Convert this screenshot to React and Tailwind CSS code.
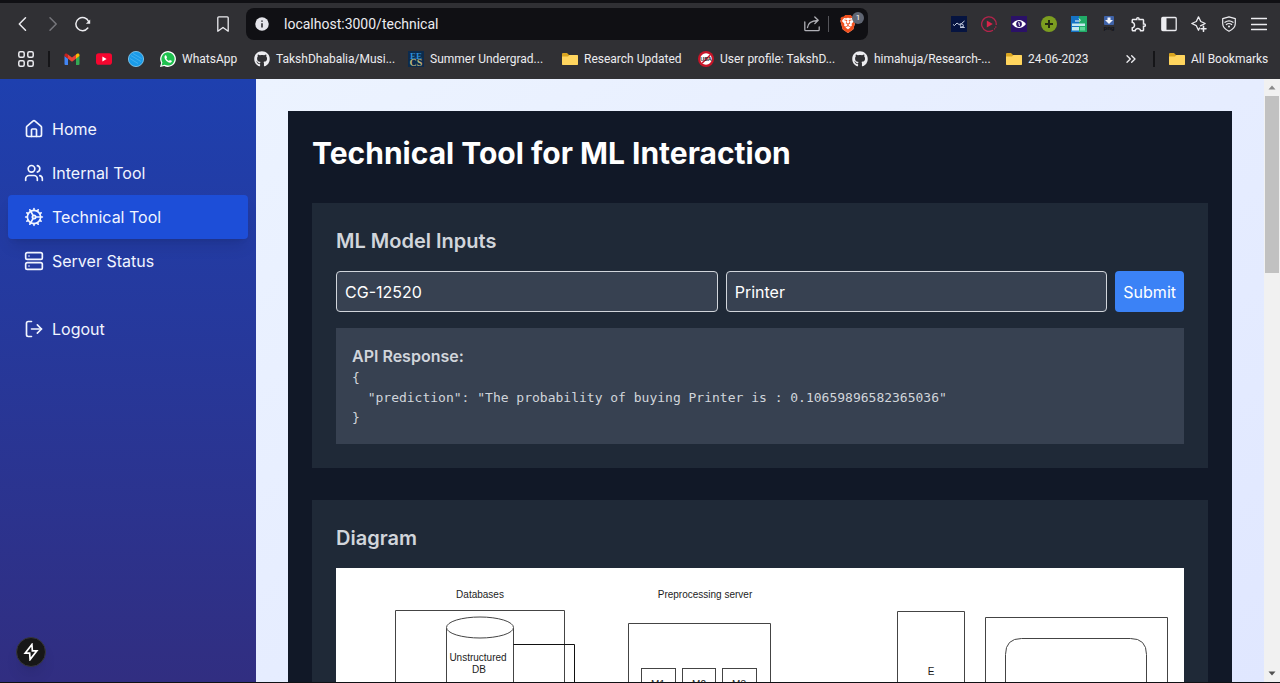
import { useState } from "react";
import { House, Users, Cog, Server, LogOut, ChevronsRight } from "lucide-react";
import { FaGithub } from "react-icons/fa";
import { MdOutlineExtension } from "react-icons/md";
import { SiBrave } from "react-icons/si";

const stroke = {
  fill: "none",
  stroke: "currentColor",
  strokeLinecap: "round",
  strokeLinejoin: "round",
};

function Folder() {
  return (
    <svg viewBox="0 0 16 16" className="size-4">
      <path d="M0 3a1 1 0 0 1 1-1h4l2 2h8a1 1 0 0 1 1 1v8a1 1 0 0 1-1 1H1a1 1 0 0 1-1-1z" fill="#d9a520" />
      <path d="M0 5.500h6l1.500-1.500H15a1 1 0 0 1 1 1v8a1 1 0 0 1-1 1H1a1 1 0 0 1-1-1z" fill="#ffd55e" />
    </svg>
  );
}

function Gmail() {
  return (
    <svg viewBox="0 0 16 16" className="size-4">
      <path d="M0.500 5v8a1 1 0 0 0 1 1H4V7.500z" fill="#4285f4" />
      <path d="M15.500 5v8a1 1 0 0 1-1 1H12V7.500z" fill="#34a853" />
      <path d="M12 3.500v4.200l3.500-2.600V4c0-1.500-1.500-2-2.500-1.300z" fill="#fbbc04" />
      <path d="M4 3.500v4.200L0.500 5.100V4c0-1.500 1.500-2 2.500-1.300z" fill="#c5221f" />
      <path d="M4 3.500 8 6.500l4-3v4.200l-4 3-4-3z" fill="#ea4335" />
    </svg>
  );
}

function YouTube() {
  return (
    <svg viewBox="0 0 16 16" className="size-4">
      <rect y="2.300" width="16" height="11.400" rx="2.800" fill="#f5062f" />
      <path d="M6.400 5.600v4.800L10.600 8z" fill="#fff" />
    </svg>
  );
}

function BlueBall() {
  return (
    <svg viewBox="0 0 16 16" className="size-4">
      <circle cx="8" cy="8" r="7.600" fill="#1a9be8" stroke="#8bd0f5" strokeWidth=".8" />
      <path d="M3 4.500l10 6M5 2.500l8.500 5M2 7.500l8 5" stroke="#5fbcf2" strokeWidth=".6" />
    </svg>
  );
}

function WhatsApp() {
  return (
    <svg viewBox="0 0 16 16" className="size-4">
      <path d="M0 16l1.150-4.100A7.900 7.900 0 1 1 4.200 14.900z" fill="#fff" />
      <path d="M1.600 14.400l.8-2.900a6.600 6.600 0 1 1 2.300 2.200z" fill="#1fc14f" />
      <path d="M5.700 4.200c-.3 0-1.300.6-1.200 2 .2 2.600 3.200 5.300 5.500 5.500 1.100.1 1.900-.8 1.900-1.600 0-.3-1.700-1.200-2-1.100-.4.100-.6.900-.9.900-.8-.1-2.400-1.600-2.600-2.400 0-.3.600-.6.600-.9 0-.4-.7-2.300-1.300-2.400z" fill="#fff" />
    </svg>
  );
}

function Eecs() {
  return (
    <svg viewBox="0 0 16 16" className="size-4">
      <rect width="16" height="16" fill="#0c2b4d" />
      <text x="8" y="7.500" fontSize="9" fontWeight="700" textAnchor="middle" fill="#2c8fd6" fontFamily="Liberation Serif, serif">EE</text>
      <text x="8" y="15" fontSize="10" fontWeight="700" textAnchor="middle" fill="#bdb57c" fontFamily="Liberation Serif, serif">CS</text>
    </svg>
  );
}

function UserProfile() {
  return (
    <svg viewBox="0 0 16 16" className="size-4">
      <circle cx="8" cy="8" r="8" fill="#c81428" />
      <circle cx="8" cy="8" r="5.800" fill="#fff" />
      <path d="M4.200 12 12 4.200" stroke="#c81428" strokeWidth="1.600" />
      <text x="8" y="10" fontSize="5.500" fontWeight="700" textAnchor="middle" fill="#20141a" fontFamily="Liberation Sans, sans-serif">USA</text>
    </svg>
  );
}

const bookmarks = [
  { label: "Gmail", hidden: true, icon: <Gmail /> },
  { label: "YouTube", hidden: true, icon: <YouTube /> },
  { label: "Blog", hidden: true, icon: <BlueBall /> },
  { label: "WhatsApp", icon: <WhatsApp />, width: "w-[78px]" },
  { label: "TakshDhabalia/Musi...", icon: <FaGithub size={16} />, width: "w-[138px]" },
  { label: "Summer Undergrad...", icon: <Eecs />, width: "w-[138px]" },
  { label: "Research Updated", icon: <Folder />, width: "w-[120px]" },
  { label: "User profile: TakshD...", icon: <UserProfile />, width: "w-[138px]" },
  { label: "himahuja/Research-...", icon: <FaGithub size={16} />, width: "w-[138px]" },
  { label: "24-06-2023", icon: <Folder />, width: "w-[88px]" },
];

const extensions = [
  {
    label: "Chart extension",
    icon: (
      <svg viewBox="0 0 16 16" className="size-4">
        <rect width="16" height="16" fill="#061440" />
        <path d="M2 8.500l1.500 1L6 7l2 1.500 2.500-1 3-2.500" stroke="#dfe6f5" strokeWidth=".9" fill="none" />
        <circle cx="10.800" cy="9.500" r="1.500" stroke="#dfe6f5" strokeWidth=".9" fill="none" />
        <path d="M12 10.500l1.500 1H9" stroke="#dfe6f5" strokeWidth=".8" fill="none" />
      </svg>
    ),
  },
  {
    label: "Video speed",
    icon: (
      <svg viewBox="0 0 16 16" className="size-4">
        <path d="M12 14.200A7.300 7.300 0 1 1 15.200 9" stroke="#b3244b" strokeWidth="1.300" fill="none" />
        <path d="M15 10.500a7 7 0 0 1-2 3" stroke="#b3244b" strokeWidth="1.300" strokeDasharray="1.200 1" fill="none" />
        <path d="M5.800 4.400v7.200L11.800 8z" fill="#d92349" />
      </svg>
    ),
  },
  {
    label: "Eye extension",
    icon: (
      <svg viewBox="0 0 16 16" className="size-4">
        <rect width="16" height="16" fill="#2b1168" />
        <path d="M1 8q3.200-4 7-4t7 4q-3.200 4-7 4T1 8z" fill="#fff" />
        <circle cx="8" cy="8" r="2.900" fill="#2b1168" />
        <path d="M7 6.800h1.200v2.600H9" stroke="#fff" strokeWidth=".9" fill="none" />
      </svg>
    ),
  },
  {
    label: "Add",
    icon: (
      <svg viewBox="0 0 16 16" className="size-4">
        <circle cx="8" cy="8" r="8" fill="#7c9d20" />
        <path d="M8 4v8M4 8h8" stroke="#252b12" strokeWidth="2" />
      </svg>
    ),
  },
  {
    label: "Page builder",
    icon: (
      <svg viewBox="0 0 16 16" className="size-4">
        <rect width="16" height="16" fill="#21ab68" />
        <path d="M0 0h8v16H0z" fill="#1572c4" />
        <path d="M1 7.500h13v2.500H1zM1 11h7v3.500H1z" fill="#c5e9ee" />
        <path d="M9 11h5v3.500H9z" fill="#5ed69a" />
        <path d="M4 5h5M8 2.500l1.500 2" stroke="#fff" strokeWidth="1" />
      </svg>
    ),
  },
  {
    label: "Save as png",
    icon: (
      <svg viewBox="0 0 16 16" className="size-4">
        <rect x="3" y="0" width="10" height="9" rx="1" fill="#3e62a8" />
        <path d="M6.500 1.500h3V4H12L8 8 4 4h2.500z" fill="#f1f4fb" />
        <text x="8" y="14" fontSize="6" fontWeight="700" textAnchor="middle" fill="#121318" fontFamily="Liberation Sans, sans-serif">png</text>
      </svg>
    ),
  },
  { label: "Extensions", icon: <MdOutlineExtension size={18} className="-mx-px shrink-0" /> },
  {
    label: "Sidebar",
    icon: (
      <svg viewBox="0 0 16 16" className="size-4">
        <rect x=".8" y="1.500" width="14.400" height="13" rx="1" {...stroke} strokeWidth="1.300" />
        <path d="M1 2h4.500v12H1z" fill="currentColor" />
      </svg>
    ),
  },
  {
    label: "Leo AI",
    icon: (
      <svg viewBox="0 0 16 16" className="size-4">
        <path d="M9.500 9.800 14.200 7.500 9.800 5.500 7.500.9 5.300 5.500.8 7.500 5.300 9.700 7.500 14.200 8.500 12" {...stroke} strokeWidth="1.300" />
        <path d="M12.500 10.300v5M10 12.800h5" {...stroke} strokeWidth="1.600" />
      </svg>
    ),
  },
  {
    label: "VPN",
    icon: (
      <svg viewBox="0 0 16 16" className="size-4">
        <path d="M8 .8l6.300 1.800v5c0 3.600-3 6.200-6.300 7.700C4.700 13.800 1.700 11.200 1.700 7.600v-5z" {...stroke} strokeWidth="1.200" />
        <path d="M4 6.300q4-3 8 0M5.300 8.500q2.700-2 5.400 0" {...stroke} strokeWidth="1.200" />
        <circle cx="8" cy="10.600" r="1" fill="currentColor" />
      </svg>
    ),
  },
  {
    label: "Menu",
    icon: (
      <svg viewBox="0 0 16 16" className="size-4">
        <path d="M.5 2.500h15M.5 8.500h15M.5 13.500h15" {...stroke} strokeWidth="1.300" />
      </svg>
    ),
  },
];

function BrowserChrome() {
  return (
    <header className="shrink-0 border-t-3 border-[#101014] bg-[#303034] font-['Roboto','Noto_Sans',sans-serif] text-[#ececf0]">
      <div className="flex h-[41px] items-center">
        <div className="flex items-center gap-3.5 pl-[15px]">
          <button aria-label="Back" className="size-4">
            <svg viewBox="0 0 16 16" className="size-4">
              <path d="M10.500 1.800 4.300 8l6.200 6.200" {...stroke} strokeWidth="1.500" />
            </svg>
          </button>
          <button aria-label="Forward" className="size-4 text-[#77777c]">
            <svg viewBox="0 0 16 16" className="size-4">
              <path d="M5 1.800 11.200 8 5 14.200" {...stroke} strokeWidth="1.500" />
            </svg>
          </button>
          <button aria-label="Reload" className="size-4">
            <svg viewBox="0 0 16 16" className="size-4">
              <path d="M12.800 12A6.600 6.600 0 1 1 13.600 5.500" {...stroke} strokeWidth="1.500" />
              <path d="M15.200 3.500v4.300h-4.300z" fill="currentColor" />
            </svg>
          </button>
        </div>
        <button aria-label="Bookmark this page" className="ml-[124px] size-4">
          <svg viewBox="0 0 16 16" className="size-4">
            <path d="M2.800 1.800q0-1 1-1h8.400q1 0 1 1v13.400L8 11.400l-5.200 3.800z" {...stroke} strokeWidth="1.300" />
          </svg>
        </button>
        <div className="ml-[15px] flex h-8 flex-1 items-center rounded-lg bg-[#101014] pr-1 pl-[9px]">
          <svg viewBox="0 0 16 16" className="size-3.5">
            <circle cx="8" cy="8" r="7.700" fill="#e4e4ea" />
            <path d="M8 7v5M8 4v1.500" stroke="#202024" strokeWidth="1.700" />
          </svg>
          <input
            aria-label="Address"
            defaultValue="localhost:3000/technical"
            className="ml-[15px] min-w-0 flex-1 bg-transparent text-sm outline-none"
          />
          <button aria-label="Share" className="size-4 text-[#b0b0b6]">
            <svg viewBox="0 0 16 16" className="size-4">
              <path d="M.8 6v7.700q0 1 1 1h12.400q1 0 1-1V11" {...stroke} strokeWidth="1.300" />
              <path d="M3.500 11.500Q4 5 13.800 4.300M10.800 1l3.400 3.300-3.400 3.300" {...stroke} strokeWidth="1.300" />
            </svg>
          </button>
          <span className="ml-2 h-4 w-px bg-[#55555a]" />
          <button aria-label="Brave Shields, 1 blocked" className="relative ml-2.5 flex h-6 w-[25px] items-center">
            <svg viewBox="0 0 24 24" className="size-[18px]">
              <path d="M12 1 20 3l2 5-3 11-7 5-7-5L2 8l2-5z" fill="#fff" />
              <SiBrave size={24} color="#f0501e" />
            </svg>
            <span className="absolute top-0 right-0 flex size-3 items-center justify-center rounded-full bg-[#5f6572] text-[8px] text-white">1</span>
          </button>
        </div>
        <div className="ml-[83px] flex items-center gap-3.5 pr-[13px]">
          {extensions.map((item) => (
            <button key={item.label} aria-label={item.label} className="flex size-4 items-center justify-center">
              {item.icon}
            </button>
          ))}
        </div>
      </div>
      <nav aria-label="Bookmarks" className="flex h-[35px] items-center pb-1.5 pl-[18px] text-xs">
        <button aria-label="Apps" className="size-4">
          <svg viewBox="0 0 16 16" className="size-4">
            <g {...stroke} strokeWidth="1.500">
              <rect x=".8" y=".8" width="5.400" height="5.400" rx="1.500" />
              <rect x="9.800" y=".8" width="5.400" height="5.400" rx="1.500" />
              <rect x=".8" y="9.800" width="5.400" height="5.400" rx="1.500" />
              <rect x="9.800" y="9.800" width="5.400" height="5.400" rx="1.500" />
            </g>
          </svg>
        </button>
        <span className="ml-3.5 h-4 w-0.5 bg-[#151518]" />
        <div className="ml-3.5 flex items-center gap-4">
          {bookmarks.map((item) =>
            item.hidden ? (
              <a key={item.label} href="#bookmark" aria-label={item.label} className="size-4">
                {item.icon}
              </a>
            ) : (
              <a key={item.label} href="#bookmark" className={`flex items-center gap-1.5 whitespace-nowrap ${item.width}`}>
                <span className="size-4 shrink-0">{item.icon}</span>
                {item.label}
              </a>
            )
          )}
        </div>
        <div className="ml-auto flex items-center pr-3.5">
          <button aria-label="More bookmarks" className="size-4">
            <ChevronsRight size={16} />
          </button>
          <span className="mx-3.5 h-4 w-0.5 bg-[#151518]" />
          <a href="#bookmark" className="flex w-[97px] items-center gap-1.5 whitespace-nowrap">
            <span className="size-4 shrink-0"><Folder /></span>
            All Bookmarks
          </a>
        </div>
      </nav>
    </header>
  );
}

function NavItem({ icon: Icon, label, active }) {
  return (
    <a
      href="#nav"
      aria-current={active ? "page" : undefined}
      className={`flex items-center gap-2 rounded px-4 py-2.5 ${active ? "bg-[#1d4ed8] shadow-lg" : ""}`}
    >
      <Icon size={20} strokeWidth={2} />
      {label}
    </a>
  );
}

function Sidebar() {
  return (
    <aside className="w-64 shrink-0 bg-linear-to-b/srgb from-[#1e40af] to-[#312e81] px-2 pt-7 text-[#f1f5ff]">
      <nav aria-label="Main">
        <NavItem icon={House} label="Home" />
        <NavItem icon={Users} label="Internal Tool" />
        <NavItem icon={Cog} label="Technical Tool" active />
        <NavItem icon={Server} label="Server Status" />
      </nav>
      <div className="mt-6">
        <NavItem icon={LogOut} label="Logout" />
      </div>
    </aside>
  );
}

function Diagram() {
  return (
    <svg
      viewBox="0 0 848 400"
      role="img"
      aria-label="Architecture diagram"
      className="w-full bg-white font-['Liberation_Sans',Arial,sans-serif] text-[10px]"
    >
      <g fill="none" stroke="#444" strokeWidth="1">
        <path d="M59.500 400V42.500h169V400" />
        <path d="M110.500 400V60M177.500 60v340" />
        <ellipse cx="144" cy="59.500" rx="33.500" ry="10.500" fill="#fff" />
        <path d="M177.500 76.500h61V400" stroke="#111" />
        <path d="M292.500 400V55.500h142V400" />
        <rect x="305.500" y="100.500" width="34" height="34" />
        <rect x="346.500" y="100.500" width="33" height="34" />
        <rect x="386.500" y="100.500" width="34" height="34" />
        <path d="M561.500 400V43.500h67V400" />
        <path d="M649.500 400V49.500h182V400" />
        <path d="M669.500 400V86.500q0-16 16-16h109q16 0 16 16V400" />
      </g>
      <g fill="#1c1c1c" textAnchor="middle">
        <text x="144" y="30">Databases</text>
        <text x="369" y="30">Preprocessing server</text>
        <text x="142" y="93">Unstructured</text>
        <text x="143" y="105">DB</text>
        <text x="322" y="120">M1</text>
        <text x="363" y="120">M2</text>
        <text x="403" y="120">M3</text>
        <text x="595" y="107">E</text>
      </g>
    </svg>
  );
}

function TechnicalTool() {
  const [customer, setCustomer] = useState("CG-12520");
  const [product, setProduct] = useState("Printer");
  const field =
    "min-w-0 flex-1 rounded border border-[#d1d5db] bg-[#374151] px-2 text-white outline-none";
  return (
    <main className="min-w-0 flex-1 overflow-hidden bg-linear-to-br/srgb from-[#ecf3ff] to-[#e0e7ff] p-8">
      <div className="bg-[#111827] p-6">
        <h1 className="mb-8 text-3xl font-bold text-white">Technical Tool for ML Interaction</h1>
        <section className="mb-8 bg-[#1f2937] p-6 text-[#d1d5db]">
          <h2 className="mb-4 text-xl font-semibold">ML Model Inputs</h2>
          <form className="mb-4 flex h-[41px] gap-2" onSubmit={(e) => e.preventDefault()}>
            <input aria-label="Customer ID" className={field} value={customer} onChange={(e) => setCustomer(e.target.value)} />
            <input aria-label="Product" className={field} value={product} onChange={(e) => setProduct(e.target.value)} />
            <button type="submit" className="rounded bg-[#3b82f6] px-2 text-white">Submit</button>
          </form>
          <div className="bg-[#374151] p-4">
            <h3 className="font-semibold">API Response:</h3>
            <pre className="font-['DejaVu_Sans_Mono',monospace] text-[13px] leading-5">{`{
  "prediction": "The probability of buying Printer is : 0.10659896582365036"
}`}</pre>
          </div>
        </section>
        <section className="bg-[#1f2937] p-6 text-[#d1d5db]">
          <h2 className="mb-4 text-xl font-semibold">Diagram</h2>
          <Diagram />
        </section>
      </div>
    </main>
  );
}

function Scrollbar() {
  return (
    <div aria-hidden="true" className="flex w-4 shrink-0 flex-col items-center bg-[#f1f1f1] text-[#505050]">
      <svg viewBox="0 0 16 16" className="size-4">
        <path d="M4.500 10.500h7L8 6.500z" fill="#8a8a8a" />
      </svg>
      <div className="flex w-full flex-1 flex-col px-px">
        <div className="mt-px h-[31%] bg-[#c1c1c1]" />
      </div>
      <svg viewBox="0 0 16 16" className="size-4">
        <path d="M4.500 5.500h7L8 9.500z" fill="currentColor" />
      </svg>
    </div>
  );
}

export default function App() {
  return (
    <div className="flex h-screen flex-col overflow-hidden border-b border-[#101014] font-['Inter',sans-serif] text-base">
      <BrowserChrome />
      <div className="flex min-h-0 flex-1">
        <Sidebar />
        <TechnicalTool />
        <Scrollbar />
      </div>
      <button
        aria-label="Open developer tools"
        className="fixed bottom-4 left-4 flex size-[30px] items-center justify-center rounded-full border border-[#38383c] bg-[#171717] text-white shadow-lg"
      >
        <svg viewBox="0 0 16 16" className="size-[18px]">
          <path d="M8.800 1.300 2.800 9h4l.4 5.700L13.200 7h-4z" {...stroke} strokeWidth="1.500" strokeLinejoin="miter" />
        </svg>
      </button>
    </div>
  );
}
